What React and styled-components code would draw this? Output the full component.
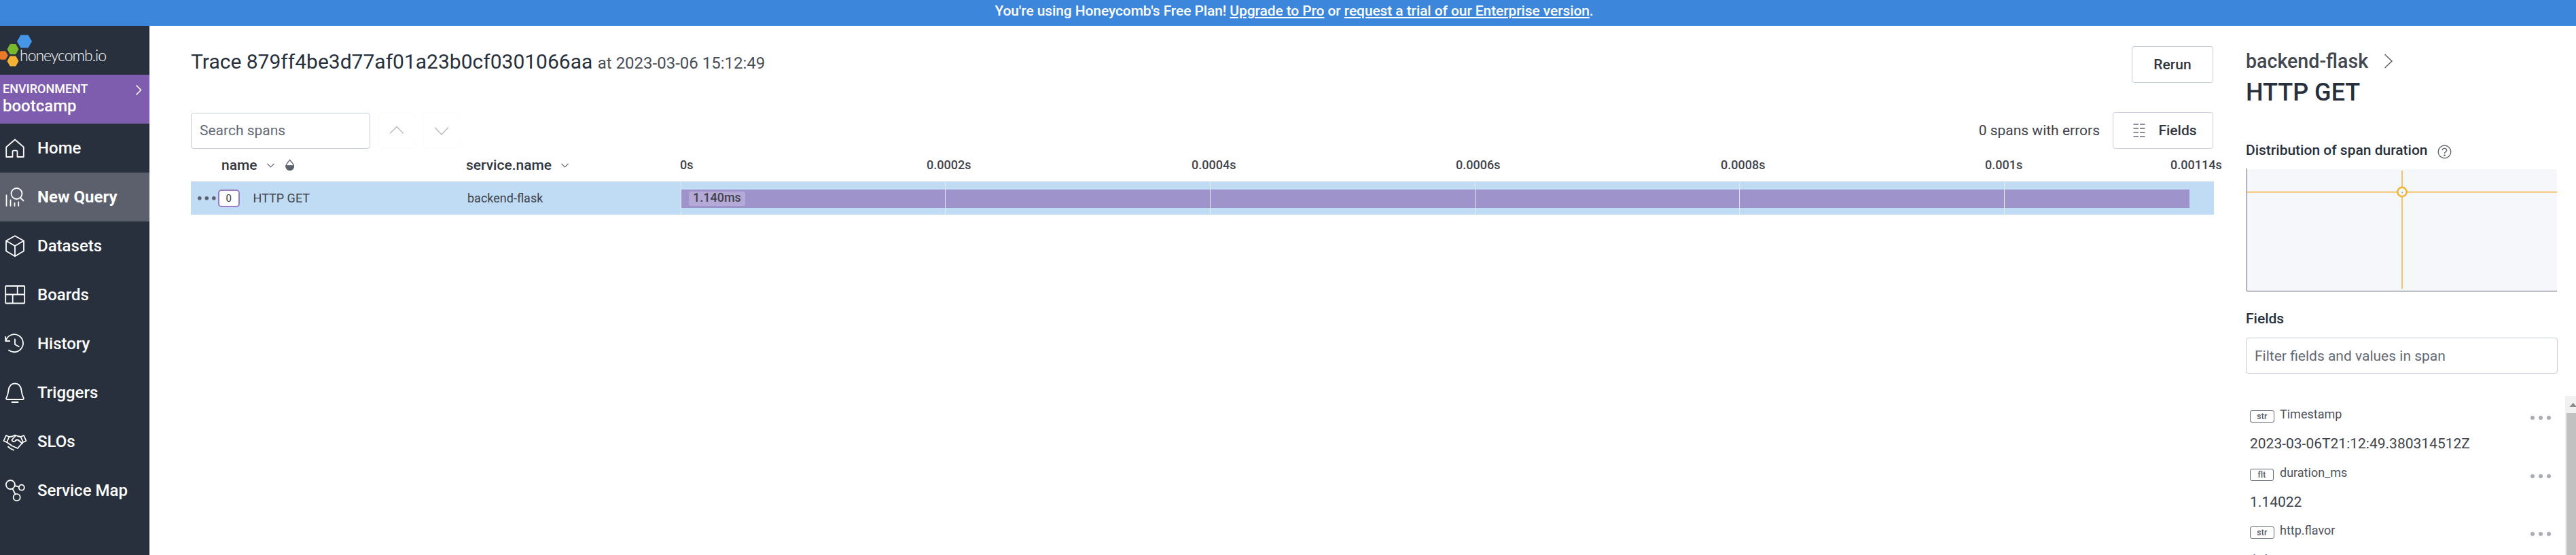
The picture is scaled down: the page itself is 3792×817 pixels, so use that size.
import React from 'react';
import styled, { createGlobalStyle } from 'styled-components';

const Global = createGlobalStyle`
  * { box-sizing: border-box; }
  body { margin: 0; background: #fff; overflow: hidden; }
  body, input, button { font-family: Roboto, "Liberation Sans", sans-serif; }
`;

const Page = styled.div`
  display: flex;
  flex-direction: column;
  height: 817px;
  overflow: hidden;
  color: #3f434c;
`;

const Banner = styled.div`
  flex: none;
  height: 38px;
  padding-left: 18px;
  background: #3c87dc;
  color: #fff;
  font-size: 21px;
  font-weight: 500;
  letter-spacing: -0.1px;
  line-height: 32px;
  text-align: center;
  a { color: inherit; text-decoration: underline; text-decoration-thickness: 2px; text-underline-offset: 2px; }
`;

const Body = styled.div`
  flex: 1;
  display: flex;
  min-height: 0;
`;

const Sidebar = styled.nav`
  flex: none;
  width: 220px;
  background: #27303c;
  color: #fff;
`;

const LogoBox = styled.div`
  height: 72px;
  svg { display: block; }
`;

const Environment = styled.div`
  display: flex;
  justify-content: space-between;
  height: 72px;
  padding: 11px 11px 0 4px;
  background: #7f5dae;
  font-weight: 500;
  svg { margin-top: 3px; }
`;

const EnvLabel = styled.div`
  font-size: 18px;
  line-height: 20px;
`;

const EnvName = styled.div`
  margin-top: 1px;
  font-size: 24px;
  line-height: 28px;
`;

const NavItem = styled.a`
  display: flex;
  align-items: center;
  height: 72px;
  padding-left: 4px;
  gap: 15px;
  font-size: 24px;
  font-weight: ${(p) => (p.$active ? 700 : 500)};
  background: ${(p) => (p.$active ? '#5b606c' : 'transparent')};
  svg { flex: none; }
`;

const Main = styled.main`
  flex: none;
  width: 3039px;
  padding: 30px 0 0 61px;
`;

const TitleRow = styled.div`
  display: flex;
  justify-content: space-between;
  align-items: flex-start;
  width: 2977px;
  height: 96px;
`;

const Title = styled.h1`
  margin: 3px 0 0;
  font-size: 30px;
  font-weight: 400;
  line-height: 40px;
  color: #27303c;
  small { font-size: 24px; color: #4a4e57; }
`;

const Button = styled.button`
  display: flex;
  align-items: center;
  justify-content: center;
  width: ${(p) => p.$width}px;
  height: 54px;
  padding: 0 0 0 ${(p) => p.$indent || 0}px;
  border: 1px solid #c5cddd;
  border-radius: 4px;
  background: #fff;
  color: #32363e;
  font-size: 21px;
  font-weight: 500;
  gap: 19px;
`;

const Toolbar = styled.div`
  display: flex;
  align-items: center;
  width: 2977px;
  height: 54px;
  margin-top: 1px;
`;

const TextInput = styled.input`
  flex: none;
  width: ${(p) => p.$width}px;
  height: 53px;
  margin-top: ${(p) => p.$top || 0}px;
  padding: 0 12px;
  border: 1px solid #c5cddd;
  border-radius: 4px;
  font-size: 21px;
  outline: none;
  &::placeholder { color: #646976; opacity: 1; }
`;

const StepButtons = styled.div`
  display: flex;
  gap: 13px;
  margin-left: 12px;
`;

const StepButton = styled.button`
  display: flex;
  align-items: center;
  justify-content: center;
  width: 53px;
  height: 54px;
  padding: 0;
  border: 1px solid #fbfbfd;
  border-radius: 4px;
  background: #fff;
`;

const Errors = styled.span`
  margin-left: auto;
  margin-right: 19px;
  font-size: 21px;
`;

const TableHead = styled.div`
  display: flex;
  align-items: center;
  height: 48px;
  font-size: 21px;
  font-weight: 500;
  color: #32363e;
`;

const HeadCell = styled.div`
  flex: none;
  display: flex;
  align-items: center;
  gap: 14px;
  width: ${(p) => p.$width}px;
  padding-left: ${(p) => p.$indent}px;
`;

const Axis = styled.div`
  display: flex;
  padding-bottom: 2px;
  font-size: 18px;
  color: #3f434c;
`;

const Tick = styled.span`
  width: ${(p) => p.$width}px;
  flex: none;
  white-space: nowrap;
`;

const SpanRow = styled.div`
  display: flex;
  align-items: center;
  width: 2978px;
  height: 49px;
  border-top: 1px solid #d3dde9;
  background: #c0dcf5;
  font-size: 18px;
`;

const NameCell = styled.div`
  flex: none;
  display: flex;
  align-items: center;
  width: 406px;
  padding-left: 10px;
`;

const ServiceCell = styled.div`
  flex: none;
  width: 315px;
  padding: 0 0 2px 1px;
`;

const SpanLabel = styled.span`
  padding-bottom: 2px;
`;

const Depth = styled.span`
  display: flex;
  align-items: center;
  justify-content: center;
  width: 32px;
  height: 26px;
  margin: 0 20px 0 3px;
  border: 2px solid #9a7cc4;
  border-radius: 5px;
  background: #fff;
  font-size: 15px;
  color: #32363e;
`;

const Lane = styled.div`
  position: relative;
  display: flex;
  align-items: center;
  width: 2257px;
  height: 48px;
`;

const Bar = styled.div`
  display: flex;
  align-items: center;
  width: 2220px;
  height: 27px;
  margin: 1px 0 0 1px;
  padding-left: 11px;
  background: #9f93cb;
`;

const Duration = styled.span`
  padding: 0 6px 3px;
  border-radius: 3px;
  background: #b5a9d7;
  line-height: 18px;
  font-weight: 500;
`;

const GridLine = styled.i`
  position: absolute;
  top: 0;
  bottom: 0;
  left: ${(p) => p.$at}px;
  width: 1px;
  background: #e4ebf7;
`;

const Detail = styled.aside`
  flex: 1;
  display: flex;
  flex-direction: column;
  padding: 32px 0 0 47px;
`;

const Crumb = styled.div`
  display: flex;
  align-items: center;
  gap: 23px;
  height: 40px;
  font-size: 28.6px;
  font-weight: 500;
  color: #444851;
`;

const SpanName = styled.h2`
  margin: 4px 0 0;
  font-size: 36px;
  font-weight: 500;
  line-height: 44px;
  color: #27303c;
`;

const SectionTitle = styled.h3`
  display: flex;
  align-items: center;
  gap: 14px;
  height: 28px;
  margin: ${(p) => p.$top}px 0 0;
  font-size: 21px;
  font-weight: 500;
  color: #27303c;
  svg { margin-top: 4px; }
`;

const Chart = styled.svg`
  display: block;
  flex: none;
  margin-top: 13px;
`;

const FieldsArea = styled.div`
  flex: 1;
  display: flex;
  justify-content: space-between;
  margin-top: 33px;
  min-height: 0;
  overflow: hidden;
`;

const FieldList = styled.div`
  width: 449px;
  padding: 15px 0 0 6px;
`;

const Field = styled.div`
  height: ${(p) => p.$height}px;
`;

const FieldHead = styled.div`
  display: flex;
  align-items: flex-start;
  height: 41px;
  font-size: 18px;
  line-height: 24px;
  color: #4f535d;
  svg { margin: 14px 0 0 auto; }
`;

const TypeTag = styled.span`
  width: ${(p) => p.$width}px;
  height: 18px;
  margin: 6px ${(p) => 44 - p.$width}px 0 0;
  border: 1.5px solid #646976;
  border-radius: 3px;
  font-size: 12px;
  font-weight: 500;
  letter-spacing: 0.3px;
  line-height: 17px;
  text-align: center;
`;

const FieldValue = styled.div`
  font-size: 21px;
  line-height: 28px;
`;

const Scrollbar = styled.div`
  width: 16px;
  padding-left: 2px;
  background: #f1f1f1;
  overflow: hidden;
  svg { display: block; }
`;

const Thumb = styled.div`
  height: 300px;
  background: #c1c1c1;
`;

const Chevron = ({ d, w, h, color, sw = 1.5 }) => (
  <svg width={w} height={h} viewBox={`0 0 ${w} ${h}`} fill="none" stroke={color} strokeWidth={sw}>
    <path d={d} />
  </svg>
);

const SortChevron = () => <Chevron w={11} h={22} d="M0.500 9L5.500 14L10.500 9" color="#646976" sw={1.1} />;

const Dots = ({ color, step, r }) => (
  <svg width={step * 2 + r * 2} height={r * 2} fill={color}>
    {[0, 1, 2].map((i) => <circle key={i} cx={r + i * step} cy={r} r={r} />)}
  </svg>
);

const Icon = ({ children }) => (
  <svg width="36" height="36" viewBox="0 0 36 36" fill="none" stroke="#fff" strokeWidth="1.8" strokeLinecap="round" strokeLinejoin="round">
    {children}
  </svg>
);

const icons = {
  home: <path d="M5.200 31V16.500L18 5.500L30.800 16.500V31H21.500V23.300Q21.500 21.600 20 21.600H16Q14.500 21.600 14.500 23.300V31Z" />,
  query: (
    <>
      <circle cx="20.500" cy="13" r="8" />
      <path d="M26 19L30.500 23.500M5.500 15.500V31M11.500 22.500V31M17.500 27V31M23.300 25.500V31" />
    </>
  ),
  datasets: <path d="M18 3.300L31 10.500V25.500L18 33.200L5 25.500V10.500ZM5 10.500L18 18L31 10.500M18 18V33" />,
  boards: (
    <>
      <rect x="4.200" y="5" width="28" height="25.500" rx="1" />
      <path d="M4.500 17.500H32M21.700 5V17.500M14.700 17.500V30" />
    </>
  ),
  history: (
    <>
      <path d="M5 12.200A13 13 0 1 1 9 27.500M4.200 8V14H10.200" />
      <path d="M18 11.500V19L23.800 22.300" />
    </>
  ),
  triggers: (
    <>
      <path d="M6.200 28Q4.800 28 5.300 26C7.800 21 8 18 8.500 14.500C9.500 8 13 4.500 18 4.500S26.500 8 27.500 14.500C28 18 28.200 21 30.700 26Q31.200 28 29.800 28Z" />
      <path d="M13.500 32H22.500" />
    </>
  ),
  slos: (
    <g transform="translate(0 1)">
      <path d="M5 8L9.500 10L6 18L1.500 16ZM31 8L26.500 10L30 18L34.500 16Z" />
      <path d="M9.500 10L14 9.500L18 7.500L22 9L26.500 10M6 18L14 23.500L22 27L29.500 18M18.500 9L13.500 14.500Q14 18 18 16.500L20 14.500H22.500L29 20M8 24.500L11 27L16 29.500" />
    </g>
  ),
  map: (
    <>
      <circle cx="11.400" cy="9.500" r="6.500" />
      <circle cx="27.800" cy="13.700" r="4" />
      <circle cx="20.700" cy="28.200" r="5" />
      <path d="M18 11.200L24 12.700M14.500 15.500L18.500 23.700" />
    </>
  ),
};

const nav = [
  ['Home', 'home'], ['New Query', 'query'], ['Datasets', 'datasets'], ['Boards', 'boards'],
  ['History', 'history'], ['Triggers', 'triggers'], ['SLOs', 'slos'], ['Service Map', 'map'],
];

const ticks = [['0s', 363], ['0.0002s', 390], ['0.0004s', 389], ['0.0006s', 390], ['0.0008s', 389], ['0.001s', 273], ['0.00114s', 70]];
const gridLines = [0, 389, 779, 1169, 1558, 1948];

const fields = [
  ['str', 'Timestamp', '2023-03-06T21:12:49.380314512Z', 86],
  ['flt', 'duration_ms', '1.14022', 85],
  ['str', 'http.flavor', '1.1', 86],
];

const hex = (cx, cy, r) =>
  [0, 60, 120, 180, 240, 300]
    .map((a) => [cx + r * Math.cos((a * Math.PI) / 180), cy + r * Math.sin((a * Math.PI) / 180)].map((n) => n.toFixed(1)).join(','))
    .join(' ');

const Logo = () => (
  <svg width="220" height="72" viewBox="0 0 220 72">
    <polygon points={hex(36, 23, 11)} fill="#4596e6" />
    <polygon points={hex(19, 34.5, 8.5)} fill="#78b72e" />
    <polygon points={hex(4.5, 43.5, 7.3)} fill="#ea7a29" />
    <polygon points={hex(19, 52, 8.5)} fill="#f4b235" />
    <text x="29" y="51.500" fontFamily="Lato, sans-serif" fontWeight="300" fontSize="23" textLength="128" fill="#fff">honeycomb.io</text>
  </svg>
);

export default function App() {
  return (
    <Page>
      <Global />
      <Banner>
        You're using Honeycomb's Free Plan! <a>Upgrade to Pro</a> or <a>request a trial of our Enterprise version</a>.
      </Banner>
      <Body>
        <Sidebar>
          <LogoBox><Logo /></LogoBox>
          <Environment>
            <div>
              <EnvLabel>ENVIRONMENT</EnvLabel>
              <EnvName>bootcamp</EnvName>
            </div>
            <Chevron w={10} h={16} d="M1.500 1.500L8.500 8.500L1.500 15.500" color="#fff" />
          </Environment>
          {nav.map(([label, icon]) => (
            <NavItem key={label} $active={icon === 'query'}>
              <Icon>{icons[icon]}</Icon>
              {label}
            </NavItem>
          ))}
        </Sidebar>
        <Main>
          <TitleRow>
            <Title>Trace 879ff4be3d77af01a23b0cf0301066aa <small>at 2023-03-06 15:12:49</small></Title>
            <Button $width={120}>Rerun</Button>
          </TitleRow>
          <Toolbar>
            <TextInput $width={264} placeholder="Search spans" />
            <StepButtons>
              <StepButton><Chevron w={22} h={14} d="M1 11.500L11 1.500L21 11.500" color="#bdbdbd" /></StepButton>
              <StepButton><Chevron w={22} h={14} d="M1 2.500L11 13L21 2.500" color="#bdbdbd" /></StepButton>
            </StepButtons>
            <Errors>0 spans with errors</Errors>
            <Button $width={148} $indent={6}>
              <svg width="18" height="22" stroke="#646976" strokeWidth="1.500">
                <path d="M0.500 2H8M10 2H17.500M0.500 8H8M10 8H17.500M0.500 14H8M10 14H17.500M0.500 20H8M10 20H17.500" />
              </svg>
              Fields
            </Button>
          </Toolbar>
          <TableHead>
            <HeadCell $width={405} $indent={45}>
              name
              <SortChevron />
              <svg width="17" height="22" viewBox="0 0 17 22" fill="none" stroke="#5b606c" strokeWidth="1.200">
                <path d="M8.700 3.300C6 7 2.900 9.500 2.900 13A5.800 5.600 0 0 0 14.500 13C14.500 9.500 11.400 7 8.700 3.300Z" />
                <path d="M2.900 11.800H14.500A5.800 6.500 0 0 1 2.900 11.800Z" fill="#5b606c" />
              </svg>
            </HeadCell>
            <HeadCell $width={315} $indent={0}>
              service.name
              <SortChevron />
            </HeadCell>
            <Axis>
              {ticks.map(([label, width]) => <Tick key={label} $width={width}>{label}</Tick>)}
            </Axis>
          </TableHead>
          <SpanRow>
            <NameCell>
              <Dots color="#5b606c" step={10.5} r={2.8} />
              <Depth>0</Depth>
              <SpanLabel>HTTP GET</SpanLabel>
            </NameCell>
            <ServiceCell>backend-flask</ServiceCell>
            <Lane>
              <Bar><Duration>1.140ms</Duration></Bar>
              {gridLines.map((x) => <GridLine key={x} $at={x} />)}
            </Lane>
          </SpanRow>
        </Main>
        <Detail>
          <Crumb>
            backend-flask
            <Chevron w={14} h={22} d="M1.500 1L12 11L1.500 21" color="#5b606c" />
          </Crumb>
          <SpanName>HTTP GET</SpanName>
          <SectionTitle $top={49}>
            Distribution of span duration
            <svg width="21" height="21" fill="none" stroke="#5b606c" strokeWidth="1.300">
              <circle cx="10.500" cy="10.500" r="9.300" />
              <path d="M7.300 8.300C7.300 4.500 13.700 4.500 13.700 8.200C13.700 10.500 10.500 10.300 10.500 13" />
              <circle cx="10.500" cy="15.700" r="0.600" fill="#5b606c" />
            </svg>
          </SectionTitle>
          <Chart width="458" height="181">
            <rect x="1" y="1" width="457" height="179" fill="#f5f7fb" />
            <path d="M1.500 0V180.500H458" fill="none" stroke="#5b606c" />
            <path d="M2 34.700H458M230 3V177" stroke="#f4b235" strokeWidth="1.500" />
            <circle cx="230" cy="34.500" r="6.700" fill="#f5f7fb" stroke="#f4b235" strokeWidth="2.500" />
            <circle cx="230.200" cy="35.200" r="0.800" fill="#5b606c" />
          </Chart>
          <SectionTitle $top={26}>Fields</SectionTitle>
          <TextInput $width={459} $top={14} placeholder="Filter fields and values in span" />
          <FieldsArea>
            <FieldList>
              {fields.map(([type, name, value, height]) => (
                <Field key={name} $height={height}>
                  <FieldHead>
                    <TypeTag $width={type === 'str' ? 36 : 35}>{type}</TypeTag>
                    {name}
                    <Dots color="#a9acb5" step={12} r={3} />
                  </FieldHead>
                  <FieldValue>{value}</FieldValue>
                </Field>
              ))}
            </FieldList>
            <Scrollbar>
              <svg width="20" height="25"><path d="M4.500 16L9.800 10L15 16Z" fill="#8b8b8b" /></svg>
              <Thumb />
            </Scrollbar>
          </FieldsArea>
        </Detail>
      </Body>
    </Page>
  );
}
